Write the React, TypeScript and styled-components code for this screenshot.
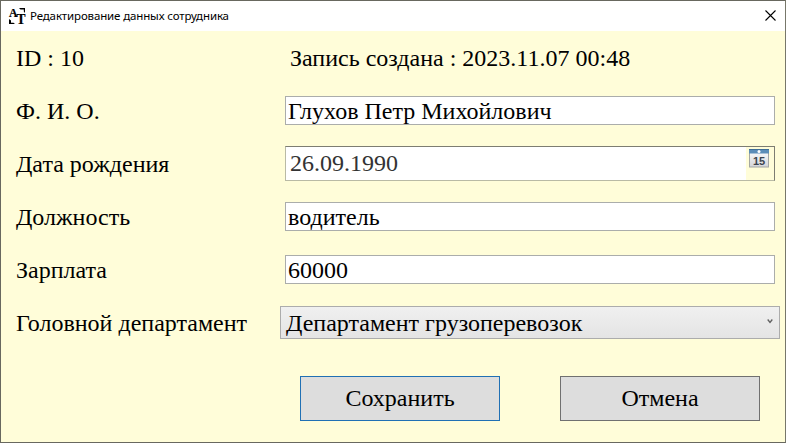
import React from "react";
import styled, { createGlobalStyle } from "styled-components";

const GlobalStyle = createGlobalStyle`
  *, *::before, *::after { box-sizing: border-box; }
  body { margin: 0; overflow: hidden; }
`;

const Window = styled.div`
  display: flex;
  flex-direction: column;
  width: 786px;
  height: 443px;
  border: 1px solid #68685f;
  border-right-color: #77776a;
  background: #fffdd9;
  color: #000;
  font: 24px/28px "Liberation Serif", "Times New Roman", serif;
`;

const TitleBar = styled.header`
  display: flex;
  align-items: center;
  flex: none;
  height: 30px;
  padding: 0 9px 0 8px;
  background: #fff;
`;

const Title = styled.h1`
  flex: 1;
  margin: 0 0 0 4px;
  font: 400 11.5px/16px "Noto Sans", "Open Sans", sans-serif;
  letter-spacing: -0.14px;
  white-space: nowrap;
`;

const CloseButton = styled.button`
  display: flex;
  padding: 0;
  margin-bottom: 1px;
  border: 0;
  background: none;
`;

const Form = styled.form`
  display: grid;
  grid-template-columns: 264px 500px;
  grid-auto-rows: 53px;
  align-items: center;
  padding-left: 15px;
`;

const Label = styled.label`
  white-space: nowrap;
`;

const Created = styled.span`
  padding-left: 10px;
`;

const TextBox = styled.input`
  width: 490px;
  height: 29px;
  margin-left: 5px;
  padding: 2px 2px 0;
  border: 1px solid #abadab;
  border-radius: 0;
  outline: 0;
  background: #fff;
  color: inherit;
  font: inherit;
`;

const DatePicker = styled.div`
  display: flex;
  width: 490px;
  height: 35px;
  margin-left: 5px;
  border: 1px solid #b9baa5;
  border-top-color: #7d7d72;
  border-right-color: #7d7d72;
`;

const DateText = styled.div`
  flex: 1;
  padding: 2px 0 0 4px;
  background: #fff;
  color: #333;
`;

const CalendarButton = styled.button`
  display: flex;
  align-items: flex-start;
  width: 28px;
  padding: 2px 0 0 3px;
  border: 0;
  background: none;
`;

const ComboBox = styled.div`
  display: flex;
  align-items: center;
  justify-content: space-between;
  height: 33px;
  padding: 0 6px 0 5px;
  border: 1px solid #acacac;
  background: linear-gradient(#f0f0f0, #e4e4e4);
`;

const Actions = styled.div`
  display: flex;
  gap: 60px;
  grid-column: 1 / -1;
  align-self: start;
  padding: 27px 0 0 284px;
`;

const Button = styled.button<{ $primary?: boolean }>`
  width: 200px;
  height: 45px;
  padding: 0 0 2px;
  border: 1px solid ${(p) => (p.$primary ? "#2070b4" : "#707070")};
  border-radius: 0;
  background: #ddd;
  color: inherit;
  font: inherit;
`;

const Logo = styled.svg`
  overflow: visible;
`;

const LogoLetter = styled.text<{ $size: number }>`
  font: 700 ${(p) => p.$size}px "Liberation Serif", serif;
  stroke: #000;
  stroke-width: 0.2px;
`;

const CalendarDay = styled.text`
  font: 700 11px "Liberation Sans", sans-serif;
  fill: #3c444f;
`;

const AppIcon = () => (
  <Logo width="17" height="17" viewBox="0 0 17 17">
    <LogoLetter $size={12} x="0" y="8.500" textLength="8.500" lengthAdjust="spacingAndGlyphs">A</LogoLetter>
    <LogoLetter $size={14} x="7.500" y="16" textLength="9" lengthAdjust="spacingAndGlyphs">T</LogoLetter>
    <path d="M10 0h6v5l-1.200-1.500V1.500H11.500z" />
    <path d="M0 11v5h6l-1.500-1.200H2V12.500z" />
  </Logo>
);

const CloseIcon = () => (
  <svg width="11" height="11" viewBox="0 0 11 11" fill="none" stroke="#000">
    <path d="M0.500 0.500l10 10M10.500 0.500l-10 10" strokeWidth="1.100" />
  </svg>
);

const CalendarIcon = () => (
  <svg width="20" height="19" viewBox="0 0 20 19">
    <defs>
      <linearGradient id="page" x2="0" y2="1">
        <stop offset="0" stopColor="#fff" />
        <stop offset="1" stopColor="#d3d5d9" />
      </linearGradient>
    </defs>
    <rect x="0.500" y="0.500" width="19" height="17.500" fill="url(#page)" stroke="#a4a6a4" />
    <path d="M0 0h20v4.500H0z" fill="#5b8db8" />
    <path d="M0 0h20v1H0z" fill="#3f6e96" />
    <circle cx="10" cy="2.500" r="1.500" fill="#fff" />
    <CalendarDay x="4" y="15.500">15</CalendarDay>
  </svg>
);

const Chevron = () => (
  <svg width="6" height="5" viewBox="0 0 6 5" fill="none" stroke="#606060">
    <path d="M0.700 0.500L3 3.500 5.300 0.500" strokeWidth="1.300" />
  </svg>
);

const ChevronSlot = styled.span`
  display: flex;
  padding-bottom: 2px;
`;

export default function App() {
  return (
    <>
      <GlobalStyle />
      <Window>
        <TitleBar>
          <AppIcon />
          <Title>Редактирование данных сотрудника</Title>
          <CloseButton type="button" aria-label="Закрыть">
            <CloseIcon />
          </CloseButton>
        </TitleBar>
        <Form>
          <Label as="span">ID : 10</Label>
          <Created>Запись создана : 2023.11.07 00:48</Created>
          <Label htmlFor="name">Ф. И. О.</Label>
          <TextBox id="name" defaultValue="Глухов Петр Михойлович" />
          <Label as="span">Дата рождения</Label>
          <DatePicker>
            <DateText>26.09.1990</DateText>
            <CalendarButton type="button" aria-label="Календарь">
              <CalendarIcon />
            </CalendarButton>
          </DatePicker>
          <Label htmlFor="position">Должность</Label>
          <TextBox id="position" defaultValue="водитель" />
          <Label htmlFor="salary">Зарплата</Label>
          <TextBox id="salary" defaultValue="60000" />
          <Label as="span">Головной департамент</Label>
          <ComboBox>
            Департамент грузоперевозок
            <ChevronSlot>
              <Chevron />
            </ChevronSlot>
          </ComboBox>
          <Actions>
            <Button type="button" $primary>Сохранить</Button>
            <Button type="button">Отмена</Button>
          </Actions>
        </Form>
      </Window>
    </>
  );
}
